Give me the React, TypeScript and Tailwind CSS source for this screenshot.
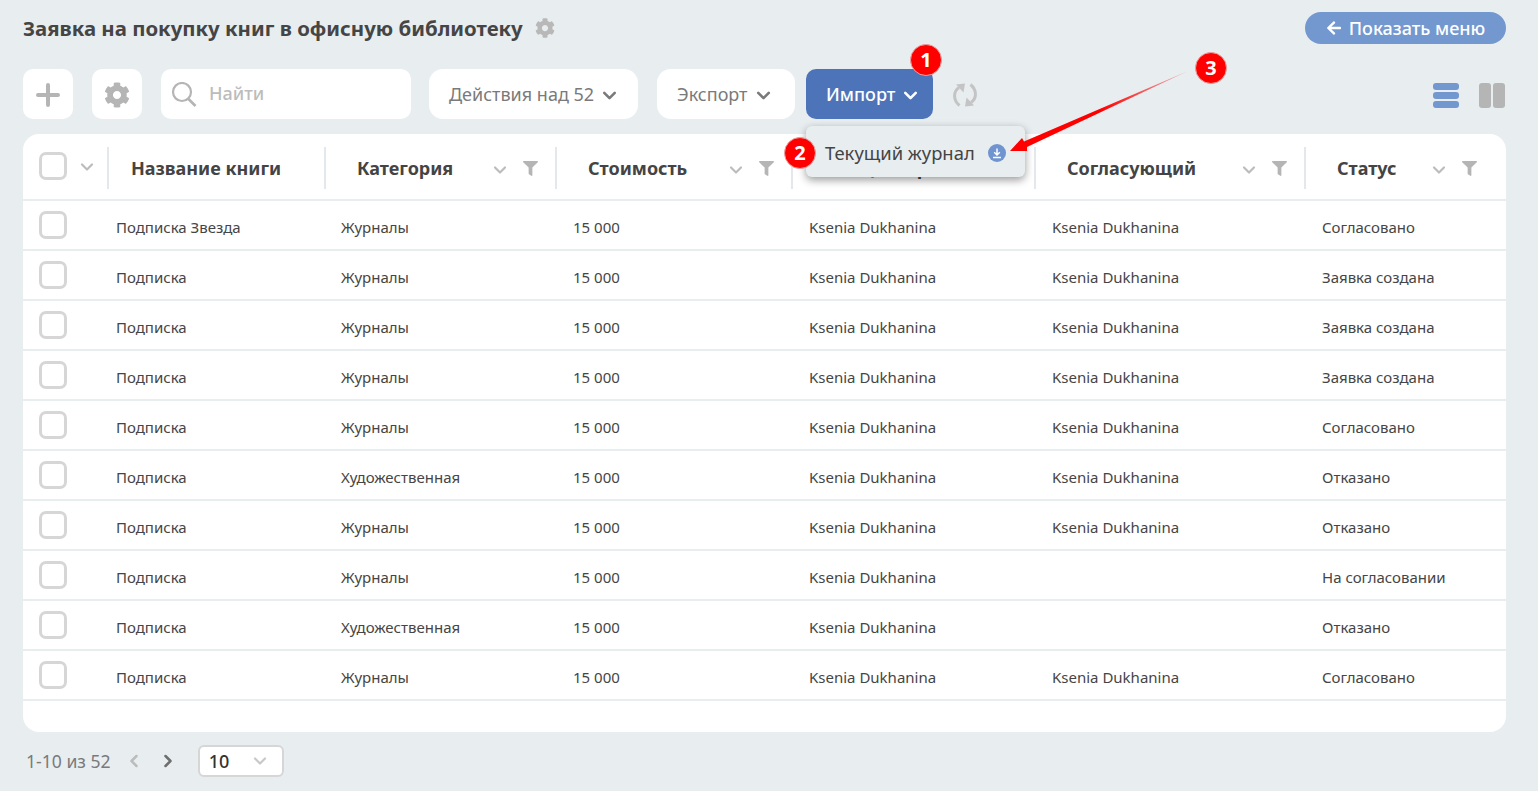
import { ChevronDown, ChevronLeft, ChevronRight } from 'lucide-react';
import { FaArrowLeft, FaCog, FaFilter } from 'react-icons/fa';

const gridCols = 'grid grid-cols-[84px_217px_231px_236px_243px_270px_202px]';

const rows = [
  ['Подписка Звезда', 'Журналы', 'Ksenia Dukhanina', 'Ksenia Dukhanina', 'Согласовано'],
  ['Подписка', 'Журналы', 'Ksenia Dukhanina', 'Ksenia Dukhanina', 'Заявка создана'],
  ['Подписка', 'Журналы', 'Ksenia Dukhanina', 'Ksenia Dukhanina', 'Заявка создана'],
  ['Подписка', 'Журналы', 'Ksenia Dukhanina', 'Ksenia Dukhanina', 'Заявка создана'],
  ['Подписка', 'Журналы', 'Ksenia Dukhanina', 'Ksenia Dukhanina', 'Согласовано'],
  ['Подписка', 'Художественная', 'Ksenia Dukhanina', 'Ksenia Dukhanina', 'Отказано'],
  ['Подписка', 'Журналы', 'Ksenia Dukhanina', 'Ksenia Dukhanina', 'Отказано'],
  ['Подписка', 'Журналы', 'Ksenia Dukhanina', '', 'На согласовании'],
  ['Подписка', 'Художественная', 'Ksenia Dukhanina', '', 'Отказано'],
  ['Подписка', 'Журналы', 'Ksenia Dukhanina', 'Ksenia Dukhanina', 'Согласовано'],
];

const headers = [
  { title: 'Категория', pr: 'pr-[17px]' },
  { title: 'Стоимость', pr: 'pr-[17px]' },
  { title: 'Инициатор', pr: 'pr-[17px]' },
  { title: 'Согласующий', pr: 'pr-[17px]' },
  { title: 'Статус', pr: 'pr-[29px]' },
];

function Checkbox() {
  return <div className="h-[28px] w-[28px] rounded-[7px] border-[3px] border-[#d6d6d6] bg-white" />;
}

function Badge({ n, className }: { n: number; className: string }) {
  return (
    <div
      className={`absolute flex h-[32px] w-[32px] items-center justify-center rounded-full border border-[#e9a0a0] bg-[#fe0000] text-[20px] font-bold text-white ${className}`}
    >
      {n}
    </div>
  );
}

export default function App() {
  return (
    <div className="relative h-[791px] overflow-hidden bg-[#e8edf0] pt-[12px] pr-[32px] pl-[23px] font-['Noto_Sans','Open_Sans',sans-serif] text-[#444]">
      <div className="flex h-[32px] items-center justify-between">
        <div className="flex items-center">
          <h1 className="text-[20.4px] font-bold text-[#454545]">Заявка на покупку книг в офисную библиотеку</h1>
          <FaCog className="mt-[1px] ml-[12px] text-[20px] text-[#b8b8b8]" />
        </div>
        <button className="flex h-[32px] w-[201px] items-center justify-center rounded-full bg-[#7398cf] text-[18px] font-medium text-white">
          <FaArrowLeft className="mr-[7px] text-[16px]" />
          Показать меню
        </button>
      </div>

      <div className="mt-[25px] flex h-[50px] items-center">
        <button className="flex h-[50px] w-[50px] items-center justify-center rounded-[10px] bg-white">
          <svg className="mt-[1px]" width="24" height="24" viewBox="0 0 24 24">
            <path d="M12 2v20M2 12h20" stroke="#b5b5b5" strokeWidth="4" strokeLinecap="round" />
          </svg>
        </button>
        <button className="ml-[19px] flex h-[50px] w-[50px] items-center justify-center rounded-[10px] bg-white">
          <FaCog className="mt-[1px] text-[26px] text-[#b5b5b5]" />
        </button>
        <div className="ml-[19px] flex h-[50px] w-[250px] items-center rounded-[10px] bg-white pl-[10px]">
          <svg width="26" height="26" viewBox="0 0 26 26" fill="none" stroke="#b5b5b5" className="mt-[2px]">
            <circle cx="11" cy="10" r="9" strokeWidth="2.2" />
            <path d="M17.5 17l7 7" strokeWidth="2.6" />
          </svg>
          <span className="mb-[2px] ml-[12px] text-[18px] font-medium text-[#bcbcbc]">Найти</span>
        </div>
        <button className="ml-[18px] flex h-[50px] w-[209px] items-center rounded-[14px] bg-white pl-[20px] text-[18px] text-[#7a7a7a]">
          Действия над 52
          <ChevronDown size={21} strokeWidth={3} className="mt-[2px] ml-[5px]" />
        </button>
        <button className="ml-[19px] flex h-[50px] w-[138px] items-center rounded-[14px] bg-white pl-[20px] text-[18px] text-[#7a7a7a]">
          Экспорт
          <ChevronDown size={21} strokeWidth={3} className="mt-[2px] ml-[6px]" />
        </button>
        <button className="ml-[11px] flex h-[50px] w-[127px] items-center rounded-[10px] bg-[#4d74b8] pl-[20px] text-[18px] font-medium text-white">
          Импорт
          <ChevronDown size={21} strokeWidth={3} className="mt-[2px] ml-[5px]" />
        </button>
        <svg className="mt-[2px] ml-[19px]" width="26" height="26" viewBox="0 0 26 26" fill="#c4c4c4">
          <path d="M7.5 23.5C1 18 1 9.5 7 5.5" fill="none" stroke="#c4c4c4" strokeWidth="3" />
          <path d="M4 2.5l9-1-1.5 9z" />
          <path d="M18.5 2.5C25 8 25 16.500 19 20.500" fill="none" stroke="#c4c4c4" strokeWidth="3" />
          <path d="M22 23.500l-9 1 1.500-9z" />
        </svg>
        <div className="mt-[2px] mr-[1px] ml-auto flex items-center">
          <div className="flex w-[26px] flex-col gap-[2px]">
            <div className="h-[7px] rounded-[3px] bg-[#7398cf]" />
            <div className="h-[7px] rounded-[3px] bg-[#7398cf]" />
            <div className="h-[7px] rounded-[3px] bg-[#7398cf]" />
          </div>
          <div className="ml-[20px] flex h-[25px] gap-[2px]">
            <div className="w-[12px] rounded-[3px] bg-[#b5b5b5]" />
            <div className="w-[12px] rounded-[3px] bg-[#b5b5b5]" />
          </div>
        </div>
      </div>

      <div className="mt-[15px] h-[598px] rounded-[16px] bg-white">
        <div className={`${gridCols} h-[67px] border-b-2 border-[#e8edf0]`}>
          <div className="flex items-center pb-[2px] pl-[16px]">
            <Checkbox />
            <ChevronDown size={20} strokeWidth={2.6} className="mt-[2px] ml-[10px] text-[#bcbcbc]" />
          </div>
          <div className="flex items-center">
            <div className="mt-[2px] flex h-[42px] w-full items-center border-l-2 border-[#e3e8ec] pt-[2px] pl-[22px] text-[18px] font-bold">
              Название книги
            </div>
          </div>
          {headers.map((h) => (
            <div key={h.title} className="flex items-center">
              <div
                className={`mt-[2px] flex h-[42px] w-full items-center border-l-2 border-[#e3e8ec] pt-[2px] pl-[31px] text-[18px] font-bold ${h.pr}`}
              >
                {h.title}
                <ChevronDown size={20} strokeWidth={2.6} className="mt-[2px] ml-auto text-[#bcbcbc]" />
                <FaFilter className="ml-[13px] text-[15px] text-[#b5b5b5]" />
              </div>
            </div>
          ))}
        </div>
        {rows.map((r, i) => (
          <div key={i} className={`${gridCols} h-[50px] border-b-2 border-[#e8edf0] text-[15px] text-[#454545]`}>
            <div className="flex items-center pl-[16px]">
              <Checkbox />
            </div>
            <div className="flex items-center pt-[4px] pl-[9px]">{r[0]}</div>
            <div className="flex items-center pt-[4px] pl-[17px]">{r[1]}</div>
            <div className="flex items-center pt-[4px] pl-[18px]">15 000</div>
            <div className="flex items-center pt-[4px] pl-[18px]">{r[2]}</div>
            <div className="flex items-center pt-[4px] pl-[18px]">{r[3]}</div>
            <div className="flex items-center pt-[4px] pl-[18px]">{r[4]}</div>
          </div>
        ))}
      </div>

      <div className="mt-[13px] flex h-[32px] items-center">
        <span className="ml-[3px] text-[17.6px] text-[#7a7a7a]">1-10 из 52</span>
        <ChevronLeft size={20} strokeWidth={3} className="ml-[13px] text-[#bcbcbc]" />
        <ChevronRight size={20} strokeWidth={3} className="ml-[14px] text-[#6e6e6e]" />
        <div className="ml-[20px] flex h-[32px] w-[86px] items-center justify-between rounded-[6px] border-2 border-[#d6d6d6] bg-white pr-[12px] pl-[9px] text-[18px] font-medium text-[#333]">
          10
          <ChevronDown size={20} strokeWidth={2.6} className="text-[#c8c8c8]" />
        </div>
      </div>

      {/* dropdown and the annotations drawn over the screenshot */}
      <div className="absolute top-[126px] left-[806px] flex h-[51px] w-[219px] items-center rounded-[6px] bg-[#e8edf0] pt-[2px] pl-[19px] text-[18.4px] text-[#444] shadow-[0_3px_8px_rgba(0,0,0,0.4)]">
        Текущий журнал
        <svg className="ml-[13px]" width="18" height="18" viewBox="0 0 18 18" fill="none">
          <circle cx="9" cy="9" r="9" fill="#6f94cf" />
          <path d="M9 4.500v6.500M6.200 8.300L9 11l2.800-2.700M5 13.500h8" stroke="#fff" strokeWidth="1.500" />
        </svg>
      </div>

      <svg className="absolute top-0 left-0" width="1538" height="791">
        <defs>
          <linearGradient id="tail" gradientUnits="userSpaceOnUse" x1="1188" y1="71" x2="1100" y2="110">
            <stop offset="0" stopColor="#ff0000" stopOpacity="0.25" />
            <stop offset="1" stopColor="#ff0000" />
          </linearGradient>
        </defs>
        <polygon points="1010,151 1022,138 1024,141.5 1188,71 1027,147 1027,151" fill="url(#tail)" />
      </svg>

      <Badge n={1} className="top-[44px] left-[910px]" />
      <Badge n={2} className="top-[137px] left-[784px]" />
      <Badge n={3} className="top-[52px] left-[1195px]" />
    </div>
  );
}
